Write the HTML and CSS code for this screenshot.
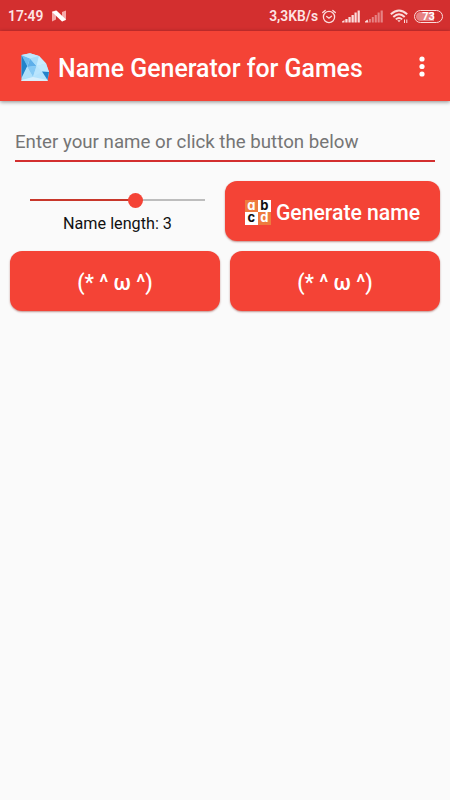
FILE: index.html
```html
<!DOCTYPE html>
<html lang="en">
<head>
<meta charset="UTF-8">
<meta name="viewport" content="width=device-width, initial-scale=1.0">
<title>Name Generator for Games</title>
<link rel="stylesheet" href="styles.css">
</head>
<body>
<div class="status-bar">
  <span class="clock">17:49</span>
  <svg class="icon-n" width="14" height="12" viewBox="0 0 14 12">
    <path d="M0 1.500L4 .5V9.500L0 11.500zM10 2L14 .5V10L10 11.500z" fill="#f5a9aa"/>
    <path d="M0 2L4.500 .5L14 9.500L10 11.500z" fill="#fff"/>
  </svg>
  <span class="speed">3,3KB/s</span>
  <svg class="icon-alarm" width="14" height="15" viewBox="0 0 14 15" fill="none" stroke="#fbdcdc" stroke-width="1.3" stroke-linecap="round">
    <circle cx="7" cy="8" r="5.600"/>
    <path d="M.7 3.600L3.200 1.400M13.300 3.600L10.800 1.400M4.700 7.400L7 9.200L9.500 7.200"/>
  </svg>
  <svg class="icon-signal" width="18" height="13" viewBox="0 0 18 13" fill="#fbdcdc">
    <path d="M0 12.500V11.500L2.500 10V12.500zM3.300 9h2.300v3.500H3.300zM6.400 7h2.300v5.500H6.400zM9.500 5h2.300v7.500h-2.300zM12.500 2.500h2.200v10h-2.200zM15.600 .5h2.200v12h-2.200z"/>
  </svg>
  <svg class="icon-signal" width="18" height="13" viewBox="0 0 18 13" fill="#e78284">
    <path d="M0 12.500V11.500L2.500 9.500L3.500 12.500z" fill="#fbdcdc"/>
    <path d="M4 9h1.900v3.500H4zM6.800 7h2v5.500h-2zM9.700 5h2.100v7.500h-2.100zM12.600 2.500h2.100v10h-2.100zM15.600 .5h2.200v12h-2.200z"/>
  </svg>
  <svg class="icon-wifi" width="19" height="15" viewBox="0 0 19 15" fill="none" stroke="#fbdcdc" stroke-width="1.900">
    <path d="M.8 5.300Q9 -2.500 17.200 5.300M3.300 8Q9 2.300 14.700 8M5.800 10.400Q9 7.500 12.200 10.400"/>
    <path d="M7.300 11.300h3.400L9 13.300z" fill="#fbdcdc" stroke="none"/>
    <path d="M14.500 10.500v3.500M16.800 10.500v3.500" stroke-width="1"/>
  </svg>
  <span class="battery"><span class="battery-level">73</span></span>
</div>

<header class="app-bar">
  <svg class="logo" width="28" height="29" viewBox="0 0 28 29">
    <path d="M.5 2L9 .3L18 3L25 10.500L28 19L26.500 28H.5z" fill="#b3e2fc"/>
    <path d="M.5 2L9 5.500L6.300 13z" fill="#6bbcf0"/>
    <path d="M.5 2L6.300 13L.5 25z" fill="#2182ca"/>
    <path d="M9 5.500L15.500 13L6.300 14z" fill="#5dafea"/>
    <path d="M.5 2L9 .3L18 3L9 5.500z" fill="#bfe8fe"/>
    <path d="M9 5.500L18 3L15.500 13z" fill="#a6dcfb"/>
    <path d="M18 3L25 10.500L15.500 13z" fill="#c9edff"/>
    <path d="M6.300 14L15.500 13L12 24z" fill="#86c9f4"/>
    <path d="M15.500 13L21 18.500L12 24z" fill="#b9e5fd"/>
    <path d="M15.500 13L25 10.500L28 19L21 18.500z" fill="#c0e9fe"/>
    <path d="M21 18.500L28 19L26.500 27z" fill="#2383cb"/>
    <path d="M6.300 14L12 24L.5 27.500z" fill="#addffa"/>
    <path d="M.5 27L12 24L26.500 27V28H.5z" fill="#d8effc"/>
  </svg>
  <h1>Name Generator for Games</h1>
  <svg class="menu" width="6" height="21" viewBox="0 0 6 21" fill="#fff">
    <circle cx="3" cy="3" r="2.600"/>
    <circle cx="3" cy="10.500" r="2.600"/>
    <circle cx="3" cy="18" r="2.600"/>
  </svg>
</header>

<main>
  <input type="text" class="name-box" placeholder="Enter your name or click the button below">

  <div class="controls">
    <div class="length">
      <div class="slider">
        <div class="slider-fill" style="width: 60%"></div>
        <div class="slider-thumb"></div>
      </div>
      <div class="length-label">Name length: 3</div>
    </div>
    <button class="btn generate">
      <span class="tiles">
        <span class="tile orange">a</span><span class="tile">b</span>
        <span class="tile">c</span><span class="tile orange">d</span>
      </span>
      <span class="generate-label">Generate name</span>
    </button>
  </div>

  <div class="faces">
    <button class="btn face">(* ^ ω ^)</button>
    <button class="btn face">(* ^ ω ^)</button>
  </div>
</main>
</body>
</html>
```

FILE: styles.css
```css
* {
  box-sizing: border-box;
}
body {
  margin: 0;
  min-height: 100vh;
  background-color: #fafafa;
  color: #111;
  font-family: Roboto, sans-serif;
}
svg {
  display: block;
  flex-shrink: 0;
}

/* Status bar */
.status-bar {
  display: flex;
  align-items: center;
  height: 31px;
  padding: 1px 7px 0 8px;
  background-color: #d32f2f;
  color: #fde4e4;
  font-size: 13.8px;
  font-weight: 600;
}
.icon-n {
  margin-left: 9px;
}
.speed {
  margin-left: auto;
}
.icon-alarm {
  margin-left: 4px;
}
.icon-signal {
  margin-left: 6px;
}
.icon-signal + .icon-signal {
  margin-left: 5px;
}
.icon-wifi {
  margin: 0 5px 0 7px;
}
.battery {
  width: 29px;
  height: 13px;
  padding: 1px;
  border: 1px solid #fbdcdc;
  border-radius: 7px;
}
.battery-level {
  display: block;
  height: 100%;
  border-radius: 5px;
  background: linear-gradient(to right, #e78284 73%, transparent 73%);
  color: #fff;
  font-size: 11px;
  font-weight: 700;
  line-height: 10px;
  text-align: center;
}

/* App bar */
.app-bar {
  display: flex;
  align-items: center;
  height: 70px;
  padding: 3px 25px 0 21px;
  background-color: #f44336;
  color: #fff;
  box-shadow: 0 1px 4px rgba(0, 0, 0, 0.45);
}
h1 {
  margin: 2px 0 0 9px;
  font-size: 24.9px;
  font-weight: 500;
  line-height: 30px;
  white-space: nowrap;
}
.menu {
  margin: 0 0 3px auto;
}

/* Content */
main {
  padding: 20px 10px 0;
}
.name-box {
  display: block;
  width: 420px;
  height: 41px;
  margin: 0 5px 19px;
  padding: 2px 0 0;
  border: none;
  border-bottom: 2px solid #d32f2f;
  background: none;
  font-family: inherit;
  font-size: 18.7px;
  outline: none;
}
.name-box::placeholder {
  color: #757575;
  opacity: 1;
}
.controls {
  display: flex;
  justify-content: space-between;
  margin-bottom: 10px;
}
.length {
  width: 215px;
  padding: 11px 20px 0;
}
.slider {
  display: flex;
  align-items: center;
  height: 16px;
  background: linear-gradient(#bdbdbd, #bdbdbd) center / 100% 2px no-repeat;
}
.slider-fill {
  height: 2px;
  background-color: #c8372b;
}
.slider-thumb {
  width: 15px;
  height: 15px;
  margin-left: -7.5px;
  border-radius: 50%;
  background-color: #f44336;
}
.length-label {
  margin-top: 6px;
  font-size: 16.2px;
  line-height: 20px;
  text-align: center;
}
.btn {
  display: flex;
  align-items: center;
  justify-content: center;
  height: 60px;
  padding: 2px 0 0;
  border: none;
  border-radius: 12px;
  background-color: #f44336;
  box-shadow: 0 1px 2px rgba(120, 20, 10, 0.45);
  color: #fff;
  font-family: inherit;
  font-size: 21.2px;
  font-weight: 500;
}
.generate {
  width: 215px;
}
.tiles {
  display: grid;
  grid-template-columns: 13px 13px;
  grid-template-rows: 12.5px 12.5px;
  margin-right: 5px;
}
.tile {
  background-color: #fff;
  color: #111;
  font-family: Inter, sans-serif;
  font-feature-settings: "cv11";
  font-size: 13px;
  font-weight: 700;
  line-height: 11.5px;
  text-align: center;
}
.tile.orange {
  background-color: #ee7b3e;
  color: #fff;
}
.faces {
  display: flex;
  gap: 10px;
}
.face {
  flex: 1;
}
```
